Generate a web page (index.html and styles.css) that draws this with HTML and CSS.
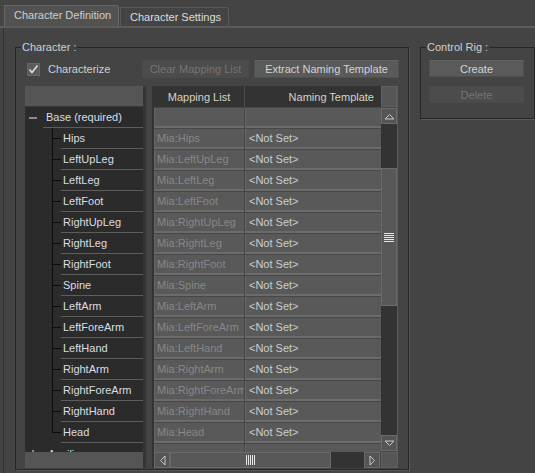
FILE: index.html
```html
<!DOCTYPE html>
<html lang="en">
<head>
    <meta charset="UTF-8">
    <title>Character Controls</title>
    <link rel="stylesheet" href="styles.css">
</head>
<body>
    <div class="tabs">
        <div class="tab active">Character Definition</div>
        <div class="tab">Character Settings</div>
    </div>

    <div class="panel">
        <div class="group char-group">
            <span class="legend">Character :</span>

            <div class="toolbar">
                <label class="check">
                    <span class="box">
                        <svg width="11" height="11" viewBox="0 0 11 11"><path d="M1.5 5.5 L4 8.5 L9.5 1.5" fill="none" stroke="#e0e0e0" stroke-width="1.6"/></svg>
                    </span>
                    Characterize
                </label>
                <button class="btn btn-clear" disabled>Clear Mapping List</button>
                <button class="btn btn-extract">Extract Naming Template</button>
            </div>

            <div class="lists">
                <div class="tree">
                    <div class="tree-head"></div>
                    <div class="tree-body">
                        <div class="tree-row root">
                            <span class="toggle minus"></span>
                            <span class="node">Base (required)</span>
                        </div>
                        <div class="tree-row child"><span class="twig"></span><span class="node">Hips</span></div>
                        <div class="tree-row child"><span class="twig"></span><span class="node">LeftUpLeg</span></div>
                        <div class="tree-row child"><span class="twig"></span><span class="node">LeftLeg</span></div>
                        <div class="tree-row child"><span class="twig"></span><span class="node">LeftFoot</span></div>
                        <div class="tree-row child"><span class="twig"></span><span class="node">RightUpLeg</span></div>
                        <div class="tree-row child"><span class="twig"></span><span class="node">RightLeg</span></div>
                        <div class="tree-row child"><span class="twig"></span><span class="node">RightFoot</span></div>
                        <div class="tree-row child"><span class="twig"></span><span class="node">Spine</span></div>
                        <div class="tree-row child"><span class="twig"></span><span class="node">LeftArm</span></div>
                        <div class="tree-row child"><span class="twig"></span><span class="node">LeftForeArm</span></div>
                        <div class="tree-row child"><span class="twig"></span><span class="node">LeftHand</span></div>
                        <div class="tree-row child"><span class="twig"></span><span class="node">RightArm</span></div>
                        <div class="tree-row child"><span class="twig"></span><span class="node">RightForeArm</span></div>
                        <div class="tree-row child"><span class="twig"></span><span class="node">RightHand</span></div>
                        <div class="tree-row child last"><span class="twig"></span><span class="node">Head</span></div>
                        <div class="tree-row root">
                            <span class="toggle plus"></span>
                            <span class="node aux">Auxiliary</span>
                        </div>
                    </div>
                    <div class="tree-foot"></div>
                </div>

                <div class="table">
                    <div class="table-top">
                        <div class="grid">
                            <div class="grid-head">
                                <div class="hcell map">Mapping List</div>
                                <div class="hcell name">Naming Template</div>
                            </div>
                            <div class="grid-body">
                                <div class="grow"><div class="cell map"></div><div class="cell name"></div></div>
                                <div class="grow"><div class="cell map">Mia:Hips</div><div class="cell name">&lt;Not Set&gt;</div></div>
                                <div class="grow"><div class="cell map">Mia:LeftUpLeg</div><div class="cell name">&lt;Not Set&gt;</div></div>
                                <div class="grow"><div class="cell map">Mia:LeftLeg</div><div class="cell name">&lt;Not Set&gt;</div></div>
                                <div class="grow"><div class="cell map">Mia:LeftFoot</div><div class="cell name">&lt;Not Set&gt;</div></div>
                                <div class="grow"><div class="cell map">Mia:RightUpLeg</div><div class="cell name">&lt;Not Set&gt;</div></div>
                                <div class="grow"><div class="cell map">Mia:RightLeg</div><div class="cell name">&lt;Not Set&gt;</div></div>
                                <div class="grow"><div class="cell map">Mia:RightFoot</div><div class="cell name">&lt;Not Set&gt;</div></div>
                                <div class="grow"><div class="cell map">Mia:Spine</div><div class="cell name">&lt;Not Set&gt;</div></div>
                                <div class="grow"><div class="cell map">Mia:LeftArm</div><div class="cell name">&lt;Not Set&gt;</div></div>
                                <div class="grow"><div class="cell map">Mia:LeftForeArm</div><div class="cell name">&lt;Not Set&gt;</div></div>
                                <div class="grow"><div class="cell map">Mia:LeftHand</div><div class="cell name">&lt;Not Set&gt;</div></div>
                                <div class="grow"><div class="cell map">Mia:RightArm</div><div class="cell name">&lt;Not Set&gt;</div></div>
                                <div class="grow"><div class="cell map">Mia:RightForeArm</div><div class="cell name">&lt;Not Set&gt;</div></div>
                                <div class="grow"><div class="cell map">Mia:RightHand</div><div class="cell name">&lt;Not Set&gt;</div></div>
                                <div class="grow"><div class="cell map">Mia:Head</div><div class="cell name">&lt;Not Set&gt;</div></div>
                                <div class="grow"><div class="cell map"></div><div class="cell name"></div></div>
                            </div>
                        </div>

                        <div class="vscroll">
                            <div class="corner"></div>
                            <div class="arrow up">
                                <svg width="11" height="7" viewBox="0 0 11 7"><path d="M1 6 H10 L5.5 1.5 Z" fill="none" stroke="#c8c8c8"/></svg>
                            </div>
                            <div class="track t1"></div>
                            <div class="thumb-v">
                                <svg width="10" height="9" viewBox="0 0 10 9"><path d="M0 0.5 H10 M0 2.5 H10 M0 4.5 H10 M0 6.5 H10 M0 8.5 H10" stroke="#e6e6e6"/></svg>
                            </div>
                            <div class="track t2"></div>
                            <div class="arrow down">
                                <svg width="11" height="7" viewBox="0 0 11 7"><path d="M1 1 H10 L5.5 5.5 Z" fill="none" stroke="#c8c8c8"/></svg>
                            </div>
                        </div>
                    </div>

                    <div class="hscroll">
                        <div class="arrow left">
                            <svg width="7" height="11" viewBox="0 0 7 11"><path d="M6 1 V10 L1.5 5.5 Z" fill="none" stroke="#c8c8c8"/></svg>
                        </div>
                        <div class="thumb-h">
                            <svg width="9" height="10" viewBox="0 0 9 10"><path d="M0.5 0 V10 M2.5 0 V10 M4.5 0 V10 M6.5 0 V10 M8.5 0 V10" stroke="#e6e6e6"/></svg>
                        </div>
                        <div class="htrack"></div>
                        <div class="arrow right">
                            <svg width="7" height="11" viewBox="0 0 7 11"><path d="M1 1 V10 L5.5 5.5 Z" fill="none" stroke="#c8c8c8"/></svg>
                        </div>
                        <div class="corner small"></div>
                    </div>
                </div>
            </div>
        </div>

        <div class="group rig-group">
            <span class="legend">Control Rig :</span>
            <button class="btn rig-btn">Create</button>
            <button class="btn rig-btn" disabled>Delete</button>
        </div>
    </div>
</body>
</html>
```

FILE: styles.css
```css
* {
    box-sizing: border-box;
}

body {
    margin: 0;
    width: 535px;
    height: 473px;
    overflow: hidden;
    background-color: #444444;
    font-family: "Liberation Sans", Arial, sans-serif;
    font-size: 11px;
    color: #cccccc;
}

/* tab strip */
.tabs {
    display: flex;
    align-items: flex-end;
    height: 28px;
    padding-left: 4px;
    border-bottom: 2px solid #5b5b5b;
}

.tab {
    height: 19px;
    padding: 0 0 0 9px;
    width: 109px;
    line-height: 18px;
    margin-left: 1px;
    background-color: #444444;
    border: 1px solid #5a5a5a;
    border-bottom: none;
    border-radius: 0 3px 0 0;
    color: #dddddd;
}

.tab.active {
    width: 115px;
    height: 21px;
    margin-left: 0;
    line-height: 19px;
    background-color: #525252;
    border-color: #676767;
    color: #cfcfcf;
}

/* group boxes */
.panel {
    display: flex;
    align-items: flex-start;
    gap: 11px;
    margin-left: 3px;
    padding: 19px 0 0 11px;
    height: 445px;
    border-left: 1px solid #323232;
}

.group {
    position: relative;
    border: 1px solid #262626;
    box-shadow: 1px 1px 0 #585858;
}

.legend {
    position: absolute;
    top: -8px;
    left: 5px;
    padding: 0 1px;
    background-color: #444444;
    line-height: 14px;
    color: #d0d0d0;
}

.char-group {
    width: 394px;
    height: 423px;
    padding: 12px 9px 0 9px;
}

.rig-group {
    width: 115px;
    height: 72px;
    padding: 12px 0 0 8px;
    display: flex;
    flex-direction: column;
    gap: 9px;
}

/* buttons */
.btn {
    font-family: inherit;
    font-size: 11px;
    height: 18px;
    padding: 0;
    background-color: #5a5a5a;
    border: 1px solid #505050;
    border-top-color: #616161;
    color: #d2d2d2;
}

.btn:disabled {
    background-color: #4c4c4c;
    border-color: #4a4a4a;
    color: #747474;
}

.rig-btn {
    width: 95px;
    height: 17px;
}

/* toolbar */
.toolbar {
    display: flex;
    align-items: center;
    height: 18px;
}

.check {
    display: flex;
    align-items: center;
    width: 115px;
    margin-left: 2px;
    color: #d0d0d0;
}

.box {
    display: flex;
    align-items: center;
    justify-content: center;
    width: 13px;
    height: 13px;
    margin-right: 8px;
    background-color: #5c5c5c;
    border: 1px solid #666666;
}

.btn-clear {
    width: 107px;
}

.btn-extract {
    width: 145px;
    margin-left: 5px;
}

/* lists */
.lists {
    display: flex;
    margin-top: 8px;
    height: 382px;
}

.tree {
    display: flex;
    flex-direction: column;
    width: 121px;
    border-right: 3px solid #353535;
}

.tree-head {
    height: 21px;
    background-color: #555555;
    border-bottom: 1px solid #3a3a3a;
}

.tree-body {
    height: 345px;
    overflow: hidden;
    background-color: #2b2b2b;
}

.tree-foot {
    height: 16px;
    background-color: #555555;
}

.tree-row {
    display: flex;
    align-items: stretch;
    height: 21px;
}

.toggle {
    position: relative;
    width: 8px;
    margin-left: 4px;
}

.toggle::before {
    content: "";
    position: absolute;
    left: 0;
    top: 10px;
    width: 8px;
    height: 2px;
    background-color: #8a8a8a;
}

.toggle.plus::after {
    content: "";
    position: absolute;
    left: 3px;
    top: 7px;
    width: 2px;
    height: 8px;
    background-color: #8a8a8a;
}

.node {
    flex: 1;
    display: flex;
    align-items: center;
    padding-left: 2px;
    border-bottom: 1px solid #5d5d5d;
    color: #dadde4;
}

.root .node {
    margin-left: 6px;
    padding-left: 3px;
}

.root .node.aux {
    padding-left: 5px;
    border-bottom: none;
}

.twig {
    width: 9px;
    margin-left: 27px;
    background:
        linear-gradient(#0c0c0c, #0c0c0c) left top / 1px 100% no-repeat,
        linear-gradient(#0c0c0c, #0c0c0c) left 10px / 9px 1px no-repeat;
}

.last .twig {
    background:
        linear-gradient(#0c0c0c, #0c0c0c) left top / 1px 11px no-repeat,
        linear-gradient(#0c0c0c, #0c0c0c) left 10px / 9px 1px no-repeat;
}

/* mapping table */
.table {
    display: flex;
    flex-direction: column;
    width: 246px;
    margin-left: 6px;
    border-left: 2px solid #333333;
}

.table-top {
    display: flex;
    height: 366px;
}

.grid {
    width: 227px;
    display: flex;
    flex-direction: column;
}

.grid-head {
    display: flex;
    height: 21px;
    background-color: #333333;
}

.hcell {
    display: flex;
    align-items: center;
    color: #d6d4c8;
}

.hcell.map {
    width: 91px;
    justify-content: center;
    border-right: 1px solid #4c4c4c;
}

.hcell.name {
    flex: 1;
    justify-content: flex-end;
    padding-right: 7px;
}

.grid-body {
    height: 345px;
    overflow: hidden;
    background-color: #474747;
}

.grow {
    display: flex;
    gap: 1px;
    height: 21px;
    padding-top: 1px;
}

.cell {
    display: flex;
    align-items: center;
    height: 20px;
    background-color: #595959;
    border-left: 1px solid #666666;
    border-bottom: 2px solid #6b6b6b;
    white-space: nowrap;
    overflow: hidden;
}

.cell.map {
    width: 90px;
    padding-left: 2px;
    color: #878787;
}

.cell.name {
    flex: 1;
    padding-left: 3px;
    color: #cdcdcd;
}

/* scrollbars */
.vscroll {
    width: 17px;
    display: flex;
    flex-direction: column;
    border-right: 1px solid #5a5a5a;
}

.corner {
    height: 21px;
    background-color: #565656;
    border: 1px solid #606060;
}

.corner.small {
    width: 17px;
    height: 16px;
}

.arrow {
    display: flex;
    align-items: center;
    justify-content: center;
    background-color: #555555;
    border: 1px solid #6a6a6a;
}

.vscroll .arrow {
    height: 16px;
}

.arrow.up {
    margin-top: 1px;
}

.track {
    background-color: #333333;
}

.t1 {
    height: 44px;
}

.t2 {
    height: 129px;
}

.thumb-v {
    display: flex;
    align-items: center;
    justify-content: center;
    height: 138px;
    background-color: #585858;
    border: 1px solid #6a6a6a;
}

.hscroll {
    display: flex;
    height: 16px;
}

.hscroll .arrow {
    width: 16px;
}

.thumb-h {
    display: flex;
    align-items: center;
    justify-content: center;
    width: 161px;
    background-color: #585858;
    border: 1px solid #6a6a6a;
}

.htrack {
    width: 33px;
    background-color: #333333;
}

.arrow.right {
    margin-right: 1px;
}
```
